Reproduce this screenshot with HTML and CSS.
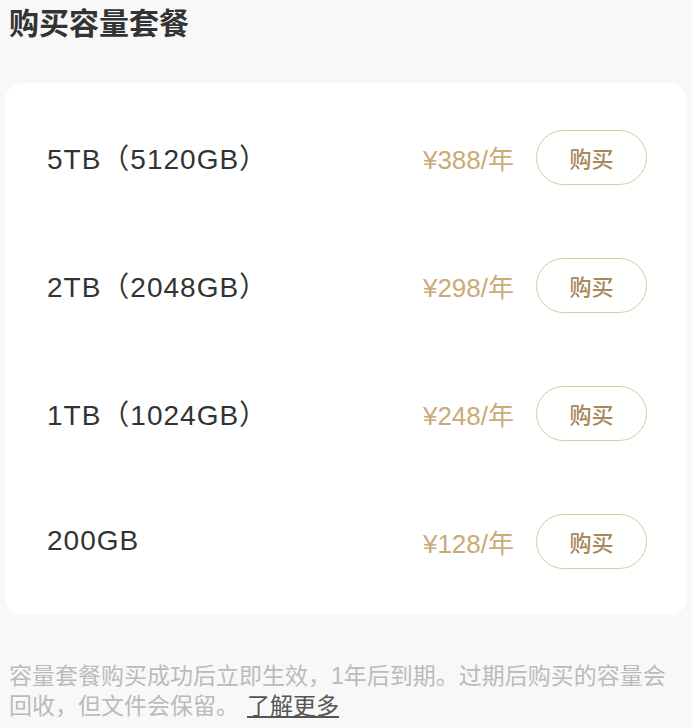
FILE: index.html
```html
<!DOCTYPE html>
<html lang="zh-CN">
<head>
    <meta charset="UTF-8">
    <meta name="viewport" content="width=device-width, initial-scale=1.0">
    <title>购买容量套餐</title>
    <link rel="stylesheet" href="styles.css">
</head>
<body>
    <h1 class="title">购买容量套餐</h1>

    <div class="card">
        <div class="plan">
            <span class="plan-name">5TB（5120GB）</span>
            <span class="price">¥388/年</span>
            <button class="buy">购买</button>
        </div>
        <div class="plan">
            <span class="plan-name">2TB（2048GB）</span>
            <span class="price">¥298/年</span>
            <button class="buy">购买</button>
        </div>
        <div class="plan">
            <span class="plan-name">1TB（1024GB）</span>
            <span class="price">¥248/年</span>
            <button class="buy">购买</button>
        </div>
        <div class="plan">
            <span class="plan-name">200GB</span>
            <span class="price">¥128/年</span>
            <button class="buy">购买</button>
        </div>
    </div>

    <p class="note">
        容量套餐购买成功后立即生效，1年后到期。过期后购买的容量会回收，但文件会保留。<a href="#" class="more">了解更多</a>
    </p>
</body>
</html>
```

FILE: styles.css
```css
body {
    font-family: "Liberation Sans", "Noto Sans CJK SC", sans-serif;
    background-color: #f8f8f8;
    margin: 0;
    padding: 0;
    color: #333;
}
.title {
    margin: 0;
    padding: 4px 9px 0;
    font-size: 30px;
    line-height: 40px;
    font-weight: bold;
    color: #333;
}
.card {
    margin: 39px 5px 0;
    padding: 10px 0;
    background-color: #fff;
    border-radius: 18px;
}
.plan {
    display: flex;
    align-items: center;
    height: 128px;
    padding: 0 40px 0 42px;
}
.plan-name {
    flex: 1;
    font-size: 28px;
    letter-spacing: 1px;
    color: #333;
}
.price {
    font-size: 26px;
    color: #c9ab77;
    margin-right: 22px;
}
.buy {
    width: 111px;
    height: 55px;
    border: 1.5px solid #dcc9a3;
    border-radius: 28px;
    background-color: #fff;
    color: #a8875a;
    font-family: "Noto Sans CJK SC", sans-serif;
    font-size: 22px;
    font-weight: 500;
    padding: 0;
}
.note {
    margin: 46px 0 0;
    padding: 0 9px;
    font-size: 23px;
    line-height: 30px;
    color: #bbb;
}
.more {
    display: inline-block;
    margin-left: 8px;
    color: #555;
    text-decoration: underline;
}
```
